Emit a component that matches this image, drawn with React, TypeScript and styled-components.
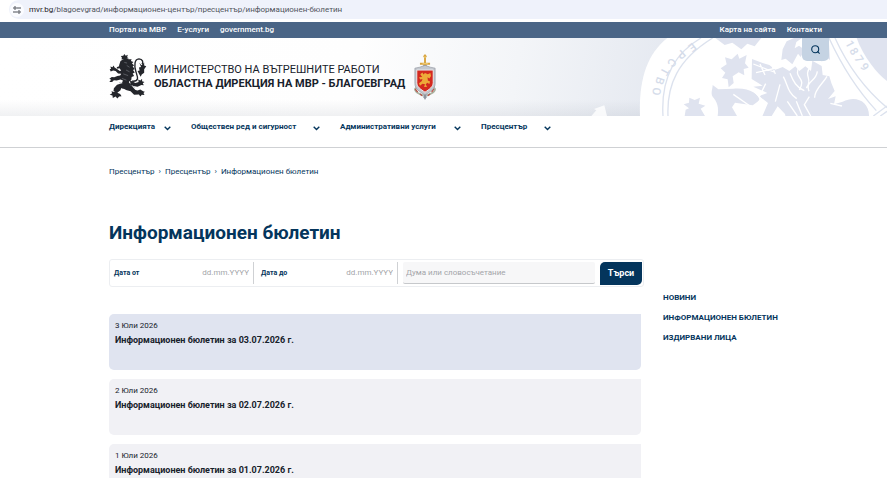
import React from "react";
import styled, { createGlobalStyle } from "styled-components";

const navy = "#04355c";

const GlobalStyle = createGlobalStyle`
  * { box-sizing: border-box; }
  html { overflow: hidden; }
  body { margin: 0; background: #fff; color: #17212b; font: 8px/12px Roboto, "Noto Sans", sans-serif; }
  a { color: inherit; text-decoration: none; }
  button, input { font: inherit; }
`;

const AddressBar = styled.div`
  height: 22px;
  padding: 0 0 3px 9px;
  background: #fff;
`;
const Address = styled.div`
  display: flex;
  align-items: center;
  gap: 5px;
  height: 19px;
  padding-left: 1px;
  border-radius: 10px 0 0 10px;
  background: #eff2fb;
  color: #50545c;
  b { color: #1d2025; font-weight: 400; }
`;
const SiteInfo = styled.span`
  display: flex;
  align-items: center;
  justify-content: center;
  width: 14px;
  height: 14px;
  border-radius: 50%;
  background: #fbfcff;
`;
const TopBar = styled.div`
  display: flex;
  justify-content: space-between;
  height: 16px;
  padding: 0 65px 0 109px;
  background: #4a6586;
  color: #fff;
  font-weight: 500;
  line-height: 16px;
`;
const TopLinks = styled.nav`
  display: flex;
  gap: 11px;
`;
const Hero = styled.header`
  position: relative;
  display: flex;
  align-items: center;
  height: 78px;
  padding: 0 58px 0 109px;
  background:
    linear-gradient(to top, rgba(90, 100, 120, 0.09), transparent 16px),
    linear-gradient(100deg, #fff 0%, #fefefe 40%, #f3f5f8 58%, #e4e8f0 76%);
`;
const Watermark = styled.svg`
  position: absolute;
  right: 0;
  top: 0;
  width: 307px;
  height: 78px;
`;
const Brand = styled.a`
  display: flex;
  align-items: center;
  color: #17212b;
  font-size: 11px;
  line-height: 14px;
`;
const BrandName = styled.span`
  display: flex;
  flex-direction: column;
  margin: 0 8px 0 6px;
`;
const SearchToggle = styled.button`
  position: absolute;
  right: 58px;
  top: 0;
  display: flex;
  align-items: center;
  justify-content: center;
  width: 27px;
  height: 23px;
  padding: 0;
  border: 0;
  border-radius: 0 0 5px 5px;
  background: #c5d3e3;
  color: ${navy};
`;
const MainNav = styled.nav`
  display: flex;
  gap: 20px;
  height: 32px;
  padding: 4px 58px 0 109px;
  border-bottom: 1px solid #cfd1d4;
`;
const NavItem = styled.button<{ $label: number }>`
  display: flex;
  align-items: center;
  height: 14px;
  padding: 0;
  border: 0;
  background: none;
  color: ${navy};
  font-weight: 700;
  white-space: nowrap;
  span { min-width: ${(p) => p.$label}px; text-align: left; }
  svg { margin-top: 3px; }
`;
const Page = styled.div`
  padding: 18px 58px 0 109px;
`;
const Crumbs = styled.nav`
  display: flex;
  gap: 4px;
  color: ${navy};
`;
const Title = styled.h1`
  margin: 43px 0 14px;
  color: ${navy};
  font-size: 19px;
  font-weight: 700;
  line-height: 24px;
`;
const Columns = styled.div`
  display: grid;
  grid-template-columns: minmax(0, 1fr) 166px;
  gap: 19px;
`;
const SearchForm = styled.form`
  display: flex;
  align-items: center;
  height: 28px;
  padding: 0 1px 0 4px;
  margin-bottom: 27px;
  border: 1px solid #eceef1;
  border-radius: 3px;
`;
const DateField = styled.label`
  display: flex;
  align-items: center;
  justify-content: space-between;
  width: 140px;
  height: 22px;
  margin-right: 7px;
  padding-right: 4px;
  border-right: 1px solid #cfd1d4;
  color: ${navy};
  font-size: 7px;
  font-weight: 700;
  &:nth-of-type(2) { width: 137px; margin-right: 5px; }
`;
const DateInput = styled.input`
  width: 60px;
  padding: 0;
  border: 0;
  background: none;
  font-size: 8px;
  font-weight: 400;
  text-align: right;
  &::placeholder { color: #a3a5a9; opacity: 1; }
`;
const WordInput = styled.input`
  flex: 1;
  min-width: 0;
  height: 22px;
  padding: 0 3px;
  border: 0;
  border-bottom: 1px solid #c6c8cb;
  border-radius: 2px;
  background: #f7f7f8;
  &::placeholder { color: #a3a5a9; opacity: 1; }
`;
const Submit = styled.button`
  width: 42px;
  height: 23px;
  margin-left: 5px;
  padding: 0;
  border: 0;
  border-radius: 5px 0 5px 0;
  background: ${navy};
  color: #fff;
  font-size: 9px;
  font-weight: 700;
`;
const Bulletins = styled.div`
  display: flex;
  flex-direction: column;
  gap: 9px;
  margin-right: 3px;
`;
const Card = styled.a<{ $active?: boolean }>`
  display: block;
  height: 56px;
  padding: 6px;
  border-radius: 5px 0 5px 5px;
  background: ${(p) => (p.$active ? "#e0e4f0" : "#f1f1f5")};
`;
const CardTitle = styled.h2`
  margin: 1px 0 0;
  font-size: 9px;
  font-weight: 700;
  line-height: 14px;
`;
const SideNav = styled.nav`
  display: flex;
  flex-direction: column;
  gap: 8px;
  padding-top: 33px;
  color: ${navy};
  font-weight: 700;
`;

const Chevron = () => (
  <svg width="7" height="5" viewBox="0 0 7 5" fill="none" stroke={navy} strokeWidth="1.4" aria-hidden="true">
    <path d="M.7.8 3.5 3.6 6.3.8" />
  </svg>
);

const Lion = () => (
  <svg width="39" height="48" viewBox="14 12 112 136" fill="#24262b" aria-hidden="true">
    <path d="M58 14l4 5 6-3-2 7 5 3-8 2-2 4-6-3-5 1 1-6-3-4 7-1z" />
    <path d="M47 34l8-5 8-2 8 2 8 0-2 5 7 3-4 4 6 5-4 4 6 7-5 3 5 7-6 3 4 7-7 3-1 8-7 6 4 7-6 8-15 5-9-4-3 8-6 5-9-3 1-8 9-10 14-4 3-8-7-3-11 3-8-1-5 5-8 0 5-6-5-3 7-5 7 1 9-4 8-1 3-5-9-1-7-7-7-2-7 3-3-6 4-2-2-6 6 2 3-5 3 6 7 4 8 6 4-2-5-6-6 1-2-4 7-3 0-3z" />
    <path d="M74 89l16 8 9-3-1-7 6 3 5-5 0 7 7 2-5 4 3 6-7-1-11 5-12-2-8-4zM60 96l17 4 5 9 8 8 6 2 8-3 8 5 5 1-4 4 3 6-8-1-4 5-4-6-14 1-10-10-13-4-9-5zM40 104l10 5-3 9-9 7 8 4 4 6-7 1-5 6-5-6-8 4-1-7-8-2 7-4-2-6 8 2z" />
    <path d="M80 92C105 94 94 75 91 64C86 45 87 29 100 28C111 29 113 37 109 43" fill="none" stroke="#24262b" strokeWidth="4" />
    <path d="M101 39l6 7 8-8 0 9 6 2-6 9 0 10-7 5-3 6-5-8-4-8 6-2-2-8 6-2z" />
    <path d="M58 38l8 2M65 47l8 5M63 60l10 5M55 71l14 5M51 84l13 5M43 96l10 2M75 103l13 7" stroke="#888b91" strokeWidth="1.5" />
  </svg>
);

const Emblem = () => (
  <svg width="24" height="50" viewBox="6 6 76 150" aria-hidden="true">
    <path d="M19 115c-12 2-5 12 1 16l18 9M69 115c12 2 5 12-1 16l-18 9" fill="none" stroke="#a9b3a1" strokeWidth="6" />
    <path d="M13 119l8 10M72 119l-7 10M28 135l7 5M60 135l-7 5" stroke="#b85248" strokeWidth="4" />
    <path d="M44 8l6 7-3 5v16h13v6H49v8H39v-8H28v-6h13V20l-3-5z" fill="#d8a33e" />
    <path d="M39 44h10v101l-5 9-5-9z" fill="#8e949d" />
    <path d="M12 53l15-3 17-6 17 6 15 3v49c0 16-14 25-32 36-18-11-32-20-32-36z" fill="#c3c7ce" stroke="#8f949e" strokeWidth="2" />
    <path d="M18 59h52v40c0 13-12 21-26 30-14-9-26-17-26-30z" fill="#d4291f" stroke="#eceef0" strokeWidth="3" />
    <path d="M29 72l7-5 3 6 5-5 9 4 8-4 2 10-5 8-6-4 1 10 7 3-2 8-7-4-5 6 5 7-10 1 3-9-8-2-8 7-3-8 9-7 2-7-7 2-4-7 10-1z" fill="#edaa39" />
    <path d="M41 18h6M36 39h17" stroke="#fff0a8" strokeWidth="2" />
  </svg>
);

const sealLetters = [
  { char: "Е", x: 337, y: 82, turn: 142 },
  { char: "Р", x: 304, y: 104, turn: 138 },
  { char: "С", x: 276, y: 128, turn: 130 },
  { char: "Т", x: 255, y: 154, turn: 118 },
  { char: "В", x: 240, y: 183, turn: 108 },
  { char: "О", x: 230, y: 214, turn: 98 },
  { char: "1", x: 810, y: 72, turn: 62 },
  { char: "8", x: 822, y: 94, turn: 60 },
  { char: "7", x: 837, y: 117, turn: 57 },
  { char: "9", x: 854, y: 140, turn: 54 },
];

const Seal = () => (
  <Watermark viewBox="0 54 921 234" aria-hidden="true">
    <path d="M180 288C176 185 198 105 262 54H921V288Z" fill="#fff" />
    <path d="M34 288l15-17-7-4 31-11 8 32z" fill="#fff" opacity=".8" />
    <g fill="none" stroke="#dce2ee" strokeWidth="4">
      <path d="M249 288C243 190 275 105 363 54M264 288C260 194 293 119 398 54" />
      <path d="M747 54C781 128 825 203 889 272M765 54C796 122 843 198 921 263" />
      <path d="M880 288l41-30M901 288l20-14" />
    </g>
    <g fill="#dfe3ef">
      <path d="M830 54H921V183C890 160 850 110 830 54Z" />
      <path d="M406 54h138l-20 25-22-8-18 17-27-20-23 7z" />
      <path d="M422 145l18-12-5-21 20 6 18-17 5 15 22-11-5 25 11 13-15 4 2 19-17-9-18 12 3 20-15 13-3-24-17-4 10-16z" />
      <path d="M311 253l16-5 1-15 16 7 16-7-4 18 20 6-14 9 13 22h-61l3-19 10-4z" />
      <path d="M398 195l17 13 45-2c48-4 76 15 79 35l-21 15-53-8-9 14 15 26h-58c4-25-1-42-16-59-5-12 1-23 1-34z" />
      <path d="M516 117l32 12 20 6 18 14 22-8 20 12 18-14 12 14 18-14 17 14 4-31 28 16 3 27 20 4 6 20 10 24-20 24 23-8-5 24 26-8c42-22 80 2 79 42l-8 49h-36c10-31 0-50-23-48-25 1-35 20-33 48H627l-12-54-22-23-29 47-20-10 20-47-27-21 25-9-42-19 28-3-33-20z" />
      <path d="M608 88l12-24 22-10h24l-17 12-5 19 13-8 17 12-12 22-8-10-17 32-20-17-13 4z" />
      <path d="M673 54h73l4 66-16-12-8 17-17-20-14 14-4-24-20-12z" />
    </g>
    <g fill="none" stroke="#fff" strokeWidth="4">
      <path d="M520 132l62 24M528 158l70-16M540 132l15 33M577 139l9 23M610 170c14 25 12 47 40 66M630 160c10 25 20 43 43 52M659 137c-23 41 23 31-1 73M691 141c-22 27 9 35-12 63M712 154c-4 33-37 28-25 60M741 169c-13 23-38 39-37 64M600 193l-14 52M557 191l-20 41M520 211l23 25-21 27M649 244l18 44M688 230l-15 24 19 34M622 244l30 44M751 250l35 8M460 223l50 35" />
    </g>
    <g fill="#d5dcea" fontFamily="Roboto, sans-serif" fontSize="34" fontWeight="500" textAnchor="middle">
      {sealLetters.map((l) => (
        <text key={l.char} dy="12" transform={`translate(${l.x} ${l.y}) rotate(${l.turn})`}>{l.char}</text>
      ))}
    </g>
  </Watermark>
);

const menu = [
  { text: "Дирекцията", label: 55 },
  { text: "Обществен ред и сигурност", label: 122 },
  { text: "Административни услуги", label: 114 },
  { text: "Пресцентър", label: 63 },
];
const bulletins = [
  { date: "3 Юли 2026", day: "03.07.2026" },
  { date: "2 Юли 2026", day: "02.07.2026" },
  { date: "1 Юли 2026", day: "01.07.2026" },
];

export default function App() {
  return (
    <div lang="bg">
      <GlobalStyle />
      <AddressBar>
        <Address>
          <SiteInfo>
            <svg width="8" height="8" viewBox="0 0 8 8" fill="none" stroke="#4b4f56" aria-hidden="true">
              <circle cx="2" cy="2" r="1.2" /><path d="M4 2h4M0 6h4" /><circle cx="6" cy="6" r="1.2" />
            </svg>
          </SiteInfo>
          <span><b>mvr.bg</b>/blagoevgrad/информационен-център/пресцентър/информационен-бюлетин</span>
        </Address>
      </AddressBar>
      <TopBar>
        <TopLinks><a href="#portal">Портал на МВР</a><a href="#services">Е-услуги</a><a href="#gov">government.bg</a></TopLinks>
        <TopLinks><a href="#map">Карта на сайта</a><a href="#contacts">Контакти</a></TopLinks>
      </TopBar>
      <Hero>
        <Seal />
        <Brand href="#home">
          <Lion />
          <BrandName>
            <span>МИНИСТЕРСТВО НА ВЪТРЕШНИТЕ РАБОТИ</span>
            <strong>ОБЛАСТНА ДИРЕКЦИЯ НА МВР - БЛАГОЕВГРАД</strong>
          </BrandName>
          <Emblem />
        </Brand>
        <SearchToggle aria-label="Търсене">
          <svg width="9" height="9" viewBox="0 0 9 9" fill="none" stroke="currentColor" strokeWidth="1.1" aria-hidden="true">
            <circle cx="4.2" cy="4.2" r="3.5" /><path d="M6.4 6.4 8.6 8.6" />
          </svg>
        </SearchToggle>
      </Hero>
      <MainNav>
        {menu.map((m) => (
          <NavItem key={m.text} $label={m.label}><span>{m.text}</span><Chevron /></NavItem>
        ))}
      </MainNav>
      <Page>
        <Crumbs>
          <a href="#press">Пресцентър</a><span>›</span><a href="#press">Пресцентър</a><span>›</span><a href="#bulletin">Информационен бюлетин</a>
        </Crumbs>
        <Title>Информационен бюлетин</Title>
        <Columns>
          <main>
            <SearchForm onSubmit={(e) => e.preventDefault()}>
              <DateField>Дата от<DateInput placeholder="dd.mm.YYYY" /></DateField>
              <DateField>Дата до<DateInput placeholder="dd.mm.YYYY" /></DateField>
              <WordInput aria-label="Дума или словосъчетание" placeholder="Дума или словосъчетание" />
              <Submit>Търси</Submit>
            </SearchForm>
            <Bulletins>
              {bulletins.map((b, i) => (
                <Card key={b.day} href={`#${b.day}`} $active={i === 0}>
                  <time>{b.date}</time>
                  <CardTitle>Информационен бюлетин за {b.day} г.</CardTitle>
                </Card>
              ))}
            </Bulletins>
          </main>
          <SideNav>
            <a href="#news">НОВИНИ</a><a href="#bulletin">ИНФОРМАЦИОНЕН БЮЛЕТИН</a><a href="#wanted">ИЗДИРВАНИ ЛИЦА</a>
          </SideNav>
        </Columns>
      </Page>
    </div>
  );
}
